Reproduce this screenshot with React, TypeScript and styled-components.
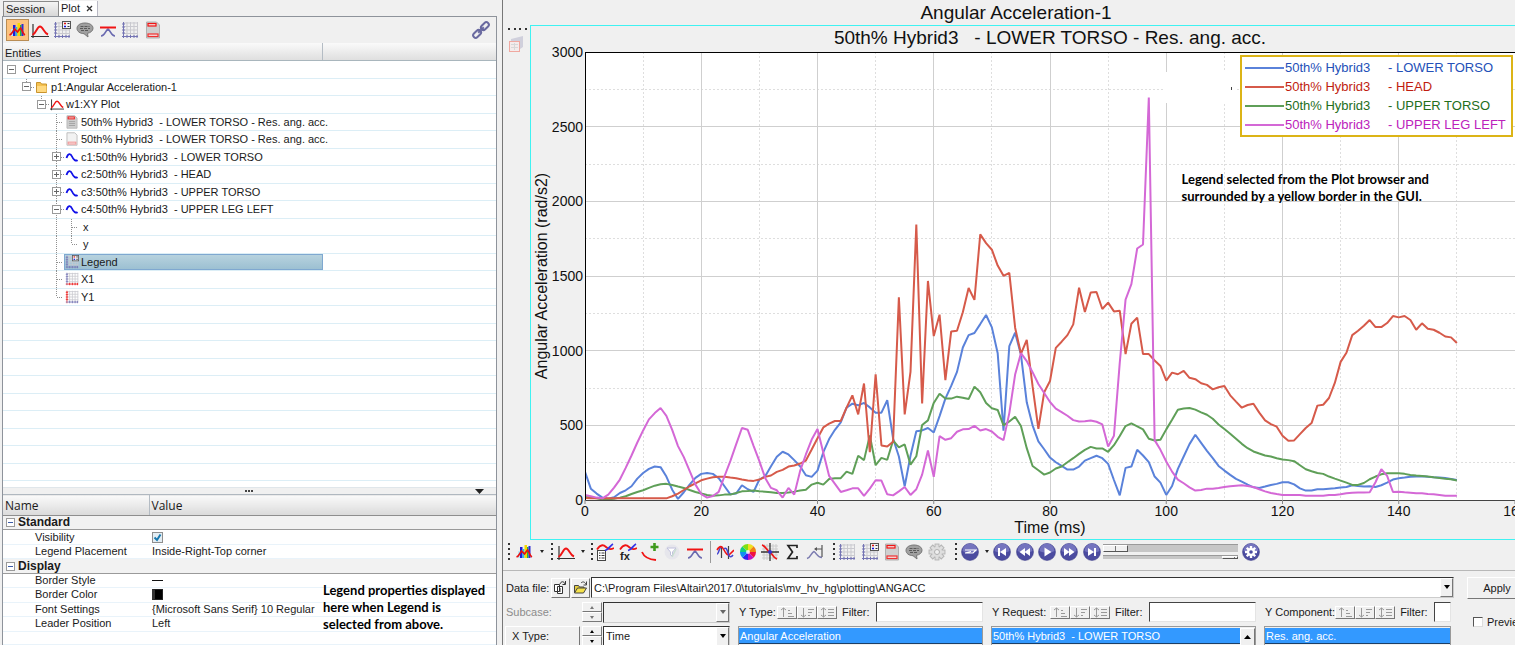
import React from "react";
import styled, { createGlobalStyle, css } from "styled-components";

const Global = createGlobalStyle`
  * { box-sizing: border-box; }
  body { margin: 0; background: #f0f0f0; overflow: hidden; }
  body, button, input, select, table { font-family: "Liberation Sans", Arial, sans-serif; font-size: 11px; color: #1a1a1a; }
  button, input, select { margin: 0; padding: 0; border-radius: 0; }
`;

const Shell = styled.main`
  display: flex;
  height: 100vh;
  overflow: hidden;
`;

/* ---------- browser panel ---------- */

const Browser = styled.section`
  flex: 0 0 497px;
  display: flex;
  flex-direction: column;
  padding-left: 2px;
  min-height: 0;
`;

const Tabs = styled.div`
  display: flex;
  height: 16px;
  padding: 1px 0 0 1px;
`;

const Tab = styled.button<{ $active?: boolean; $width: number }>`
  width: ${(p) => p.$width}px;
  border: 1px solid ${(p) => (p.$active ? "#b9b9c4" : "#8a8a8a")};
  border-width: ${(p) => (p.$active ? "0 1px 0 0" : "1px 1px 0 1px")};
  background: ${(p) => (p.$active ? "#fff" : "linear-gradient(#f4f4f4, #d8d8d8)")};
  text-align: left;
  padding-left: 2px;
  line-height: 15px;
  white-space: pre;
`;

const Panel = styled.div`
  flex: 1;
  min-height: 0;
  display: flex;
  flex-direction: column;
  border: 1px solid #8e939b;
  border-bottom: 0;
  background: #fff;
`;

const PanelTools = styled.div`
  display: flex;
  align-items: center;
  justify-content: space-between;
  height: 26px;
  padding: 0 3px;
  background: #f0f0f0;
`;

const PanelToolSet = styled.div`
  display: flex;
  width: 158px;
`;

const PanelTool = styled.button<{ $active?: boolean }>`
  flex: 1 0 22px;
  min-width: 0;
  height: 22px;
  border: 1px solid ${(p) => (p.$active ? "#b98d55" : "transparent")};
  background: ${(p) => (p.$active ? "#fdc27e" : "transparent")};
  display: flex;
  align-items: center;
  justify-content: center;
  svg { flex: none; }
`;

const TreeHeader = styled.div`
  display: flex;
  height: 18px;
  border-bottom: 1px solid #a9b6bd;
  background: linear-gradient(#fafafa, #dfdfdf);
  line-height: 20px;
`;

const TreeHeaderCell = styled.span`
  flex: 0 0 320px;
  padding-left: 2px;
  border-right: 1px solid #b4bcc4;
`;

const Tree = styled.div`
  flex: 1;
  min-height: 0;
  display: grid;
  grid-template-rows: repeat(24, minmax(0, 1fr)) 6px;
`;

const TreeRow = styled.div`
  display: flex;
  border-bottom: 1px solid #dceef6;
  padding-left: 1px;
  min-height: 0;
  width: 100%;
`;

const GuideCell = styled.span`
  position: relative;
  flex: 0 0 15px;
  display: flex;
  align-items: center;
  justify-content: center;
  svg.guide { position: absolute; left: 0; top: 0; width: 15px; height: 100%; overflow: visible; }
`;

const Expander = styled.button`
  position: relative;
  width: 9px;
  height: 9px;
  border: 1px solid #9a9a9a;
  background: #fff;
  display: flex;
`;

const Label = styled.span<{ $selected?: boolean; $icon: boolean; $level: number }>`
  flex: 0 0 ${(p) => 304 - 15 * p.$level}px;
  display: flex;
  align-items: center;
  gap: 2px;
  padding-left: ${(p) => (p.$icon ? 0 : 3)}px;
  border: 1px solid transparent;
  white-space: pre;
  line-height: 14px;
  svg { flex: 0 0 14px; }
  ${(p) =>
    p.$selected &&
    css`
      border-color: #7fa8d0;
      background: linear-gradient(#b7d2de, #9cc0d2);
    `}
`;

const Splitter = styled.div`
  display: flex;
  align-items: center;
  justify-content: space-between;
  height: 7px;
  padding: 0 12px 0 242px;
  background: #f0f0f0;
  border-top: 1px solid #e0e6ea;
`;

const Props = styled.div`
  position: relative;
`;

const PropTable = styled.table`
  width: 100%;
  height: 151px;
  border-collapse: collapse;
  table-layout: fixed;
  th, td { padding: 0; text-align: left; white-space: nowrap; }
  thead th {
    height: 21px;
    font: 12px "Open Sans", "Noto Sans", sans-serif;
    background: linear-gradient(#fafafa, #dadada);
    border-bottom: 1px solid #8e8e8e;
    border-top: 1px solid #b0b8c0;
    padding-left: 2px;
  }
  thead th:first-child { width: 146px; }
  thead th + th { border-left: 1px solid #b4bcc4; }
  tbody td { line-height: 13px; border-bottom: 1px solid #e9f3fa; vertical-align: middle; }
  tbody td:first-child { padding-left: 32px; }
  tbody td + td { padding-left: 3px; }
  tbody tr:last-child td { line-height: 12px; }
`;

const GroupRow = styled.tr`
  && th { line-height: 13px; font-size: 12px; font-weight: bold; background: #f2f2f2; border-top: 1px solid #9a9a9a; border-bottom: 1px solid #9a9a9a; padding-left: 3px; }
`;

const GroupTitle = styled.span`
  display: flex;
  align-items: center;
  gap: 3px;
`;

const TickBox = styled.span`
  display: grid;
  width: 11px;
  height: 11px;
  > * { grid-area: 1 / 1; }
  svg { pointer-events: none; z-index: 1; }
  input { appearance: none; width: 11px; height: 11px; border: 1px solid #8e8e8e; background: #e3edf3; }
  input:not(:checked) + svg { display: none; }
`;

const Stroke = styled.span`
  display: block;
  width: 11px;
  height: 1px;
  background: #111;
`;

const Swatch = styled.span`
  display: block;
  width: 11px;
  height: 11px;
  background: #000;
  border: 1px solid #222;
  border-left: 3px solid #333;
`;

const Note = styled.p<{ $place: "props" | "plot" }>`
  position: absolute;
  margin: 0;
  font: bold 13px/17px Lato, "Open Sans", sans-serif;
  color: #000;
  white-space: nowrap;
  ${(p) => (p.$place === "props" ? "left: 320px; top: 88px;" : "right: 86px; top: 119px;")}
`;

/* ---------- plot window ---------- */

const Work = styled.section`
  flex: 1;
  min-width: 0;
  display: flex;
  flex-direction: column;
  margin-left: 5px;
  border-left: 1px solid #777;
  background: #f0f0f0;
`;

const WindowTitle = styled.h1`
  margin: 0;
  padding-left: 14px;
  font-size: 19px;
  font-weight: normal;
  line-height: 26px;
  height: 25px;
  text-align: center;
  color: #111;
`;

const PlotArea = styled.div`
  flex: 1;
  min-height: 0;
  display: flex;
`;

const Strip = styled.div`
  flex: 0 0 27px;
  padding: 3px 0 0 5px;
  display: flex;
  flex-direction: column;
  gap: 5px;
`;

const Frame = styled.div`
  flex: 1;
  min-width: 0;
  display: grid;
  grid-template: 26px minmax(0, 1fr) 39px / 54px minmax(0, 1fr);
  border: 1px solid #3ff2f2;
  border-right: 0;
  overflow: hidden;
  color: #111;
`;

const Subtitle = styled.h2`
  grid-column: 2;
  margin: 0;
  font-size: 19px;
  font-weight: normal;
  line-height: 24px;
  text-align: center;
  white-space: pre;
`;

const Axis = styled.svg`
  display: block;
  width: 100%;
  height: 100%;
  overflow: visible;
  min-height: 0;
  text { font-size: 14px; fill: #111; }
  text.name { font-size: 16px; }
`;

const AxisCell = styled.div`
  min-height: 0;
  min-width: 0;
`;

const Plot = styled.div`
  position: relative;
  min-height: 0;
  background: #fff;
  > svg { display: block; width: 100%; height: 100%; }
`;

const Legend = styled.ul`
  position: absolute;
  top: 3px;
  right: 2px;
  width: 273px;
  margin: 0;
  padding: 1px 0 1px 3px;
  list-style: none;
  border: 2px solid #dcb416;
  background: #fff;
  font-size: 13px;
`;

const LegendItem = styled.li<{ $line: string; $text: string }>`
  display: flex;
  align-items: center;
  gap: 1px;
  height: 19px;
  color: ${(p) => p.$text};
  white-space: pre;
  &::before { content: ""; width: 39px; height: 2px; background: ${(p) => p.$line}; }
`;

const LegendName = styled.span`
  flex: 0 0 102px;
`;

/* ---------- toolbar ---------- */

const Toolbar = styled.div`
  display: flex;
  align-items: center;
  height: 31px;
  padding: 0 0 7px 5px;
  border-bottom: 1px solid #b8b8b8;
`;

const Grip = styled.span<{ $gap?: number }>`
  flex: 0 0 2px;
  height: 18px;
  margin: 0 1px 0 ${(p) => p.$gap ?? 5}px;
  background: repeating-linear-gradient(#333 0 2px, transparent 2px 5px);
`;

const Divider = styled.span`
  flex: 0 0 1px;
  height: 22px;
  margin: 0 3px 0 4px;
  background: #9a9a9a;
`;

const ToolGroup = styled.div<{ $width?: number }>`
  display: flex;
  flex: 0 0 ${(p) => p.$width ?? 112}px;
`;

const ToolButton = styled.button`
  flex: 1;
  height: 20px;
  min-width: 0;
  border: 0;
  background: transparent;
  display: flex;
  align-items: center;
  justify-content: center;
  svg { flex: none; }
`;

const Caret = styled.button`
  flex: 0 0 9px;
  height: 20px;
  border: 0;
  background: transparent;
  display: flex;
  align-items: center;
  justify-content: center;
  &::before { content: ""; border: solid transparent; border-width: 3px 2px 0; border-top-color: #222; }
`;

const Sliders = styled.div`
  display: flex;
  flex-direction: column;
  gap: 3px;
  flex: 0 0 135px;
`;

const Slider = styled.input<{ $thumb: number; $height: number }>`
  appearance: none;
  width: 135px;
  height: ${(p) => p.$height}px;
  background: #c6c6c6;
  border-top: 1px solid #9a9a9a;
  &::-webkit-slider-thumb {
    appearance: none;
    width: ${(p) => p.$thumb}px;
    height: ${(p) => p.$height - 1}px;
    background: linear-gradient(90deg, transparent 11px, #777 11px 12px, transparent 12px), #f0f0f0;
    border: 1px solid;
    border-color: #fff #555 #555 #fff;
  }
`;

/* ---------- data form ---------- */

const Form = styled.form`
  flex: 0 0 74px;
  padding: 6px 0 0 2px;
  overflow: hidden;
  display: grid;
  grid-template-columns: minmax(0, 1fr) 48px;
  column-gap: 13px;
  align-content: start;
`;

const FormRows = styled.div`
  display: flex;
  flex-direction: column;
  gap: 4px;
  min-width: 0;
`;

const Line = styled.div`
  display: flex;
  align-items: center;
  height: 21px;
`;

const Caption = styled.label<{ $width: number; $dim?: boolean }>`
  flex: 0 0 ${(p) => p.$width}px;
  padding-left: 1px;
  white-space: nowrap;
  color: ${(p) => (p.$dim ? "#8c8c8c" : "#1a1a1a")};
`;

const raised = css`
  border: 1px solid;
  border-color: #fff #777 #777 #fff;
  background: #f0f0f0;
`;

const FileButton = styled.button`
  ${raised}
  flex: 0 0 19px;
  height: 20px;
  margin-right: 1px;
  display: flex;
  align-items: center;
  justify-content: center;
`;

const SelectBox = styled.span<{ $width?: number; $dim?: boolean }>`
  flex: ${(p) => (p.$width ? `0 0 ${p.$width}px` : "1 1 0")};
  min-width: 0;
  display: flex;
  position: relative;
  height: 21px;
  border: 1px solid;
  border-color: #333 #ccc #ccc #333;
  background: ${(p) => (p.$dim ? "#f0f0f0" : "#fff")};
  select { appearance: none; width: 100%; border: 0; padding-left: 2px; background: transparent; outline: none; }
  &::after {
    content: "";
    position: absolute;
    right: 3px;
    top: 7px;
    border: solid transparent;
    border-width: 4px 3px 0;
    border-top-color: ${(p) => (p.$dim ? "#666" : "#000")};
  }
  &::before {
    content: "";
    position: absolute;
    right: 0;
    top: 0;
    bottom: 0;
    width: 11px;
    ${raised}
  }
`;

const Columns = styled.div`
  display: grid;
  grid-template-columns: 225px minmax(0, 245fr) minmax(0, 265fr) minmax(0, 187fr);
  column-gap: 8px;
  padding-right: 3px;
`;

const Column = styled.div`
  display: flex;
  flex-direction: column;
  gap: 4px;
  min-width: 0;
`;

const Filters = styled.div`
  display: flex;
  align-items: center;
  height: 20px;
  white-space: nowrap;
`;

const Spin = styled.span`
  flex: 0 0 20px;
  display: flex;
  flex-direction: column;
  margin-right: 1px;
`;

const SpinButton = styled.button`
  ${raised}
  height: 10px;
  display: flex;
  align-items: center;
  justify-content: center;
`;

const AxisType = styled.button`
  ${raised}
  flex: 0 0 75px;
  height: 21px;
  margin-right: 2px;
  padding-left: 6px;
  text-align: left;
`;

const SortButton = styled.button`
  ${raised}
  flex: 0 0 20px;
  height: 13px;
  display: flex;
  align-items: center;
  justify-content: center;
`;

const FilterText = styled.label`
  margin: 0 6px 0 5px;
`;

const FilterInput = styled.input`
  flex: 1;
  min-width: 0;
  height: 20px;
  border: 1px solid;
  border-color: #444 #e4e4e4 #e4e4e4 #444;
  background: #fff;
`;

const ListBox = styled.div`
  display: flex;
  height: 21px;
  padding-top: 1px;
  border: 1px solid #999;
  border-width: 1px 1px 0;
`;

const Option = styled.span`
  flex: 1;
  height: 16px;
  padding-left: 1px;
  line-height: 16px;
  color: #fff;
  background: #3399ff;
  border-bottom: 1px solid #1c3f66;
  white-space: pre;
  overflow: hidden;
`;

const Scroll = styled.button`
  ${raised}
  flex: 0 0 15px;
  height: 18px;
  display: flex;
  align-items: center;
  justify-content: center;
`;

const Actions = styled.div`
  display: flex;
  flex-direction: column;
  gap: 17px;
`;

const Apply = styled.button`
  ${raised}
  width: 60px;
  height: 22px;
`;

const Preview = styled.label`
  display: flex;
  align-items: center;
  gap: 4px;
  padding-left: 6px;
  white-space: nowrap;
  input { appearance: none; flex: 0 0 10px; height: 10px; border: 1px solid; border-color: #555 #ddd #ddd #555; background: #fff; }
`;

/* ---------- icons ---------- */

const Svg = ({ s = 18, vb = 18, children }: { s?: number; vb?: number; children: React.ReactNode }) => (
  <svg width={s} height={s} viewBox={`0 0 ${vb} ${vb}`} fill="none" aria-hidden="true">
    {children}
  </svg>
);

const BarsIcon = () => (
  <Svg>
    <path d="M3 8h2v7H3z" fill="#b8e8f8" />
    <path d="M5 4h2.500v11H5z" fill="#1c1cdc" />
    <path d="M7.500 6h2v9h-2z" fill="#28b8e8" />
    <path d="M9.500 2h2.500v13H9.500z" fill="#f6d800" />
    <path d="M12 4h1.500v11H12z" fill="#20b83c" />
    <path d="M13.500 3h2v12h-2z" fill="#2c2cd4" />
    <path d="M1.500 14c3-1 3-4 5-6l3 3 3-4c2 2 2 6 4.500 7" stroke="#e81010" strokeWidth="1.700" />
  </Svg>
);
const CurveIcon = ({ s = 18 }: { s?: number }) => (
  <Svg s={s}>
    <path d="M2 3v14M0 15.500h18" stroke="#333" strokeWidth="1.200" />
    <path d="M1.500 14C5.500 12 6 5.500 9 5.500S13 12 17 13.500" stroke="#f01414" strokeWidth="1.900" />
  </Svg>
);
const GridLines = ({ v = "#7474b4", h = "#7474b4" }: { v?: string; h?: string }) => (
  <>
    <path d="M6 1v15M9.500 1v15M13 1v15M16.500 1v15M2 2h15M2 5.500h15M2 9h15M2 12.500h15" stroke="#c9c9cf" />
    <path d="M2.500 1v16M1 3h3M1 6h3M1 9h3M1 12h3" stroke={v} strokeWidth="1" />
    <path d="M1 15.500h16M6 14v3M9.500 14v3M13 14v3M16 14v3" stroke={h} strokeWidth="1" />
  </>
);
const GridIcon = () => (
  <Svg>
    <GridLines />
  </Svg>
);
const AxisIcon = ({ axis }: { axis: "x" | "y" }) => (
  <Svg s={14}>
    <GridLines v={axis === "y" ? "#f01414" : undefined} h={axis === "x" ? "#f01414" : undefined} />
  </Svg>
);
const LegendIcon = ({ s = 18 }: { s?: number }) => (
  <Svg s={s}>
    <GridLines />
    <rect x="9.500" y="0.500" width="8" height="7" fill="#f4f4f4" stroke="#555" />
    <path d="M11 2.500h2" stroke="#e01010" strokeWidth="1.500" />
    <path d="M11 5.500h2" stroke="#1010e0" strokeWidth="1.500" />
    <path d="M14.500 2.500h2M14.500 5.500h2" stroke="#334" strokeWidth="1.200" />
  </Svg>
);
const NoteIcon = () => (
  <Svg>
    <path d="M9 2c4.800 0 8 2.200 8 5.300 0 2.600-2.400 4.400-5.500 5L12 16 8 12.700C4 12.500 1 10.500 1 7.400 1 4.200 4.200 2 9 2z" fill="#a0a0a0" stroke="#777" />
    <path d="M4.500 5.500h9M4 7.500h10M5 9.500h8" stroke="#5a5a5a" strokeDasharray="3 1" />
  </Svg>
);
const DatumIcon = () => (
  <Svg>
    <path d="M2 15c4 0 4-5 7-7 3 2 3 7 7 7" stroke="#6a6ab0" strokeWidth="1.600" />
    <path d="M1 6.500h16" stroke="#f01414" strokeWidth="2" />
  </Svg>
);
const PageIcon = ({ s = 18, part = "both" }: { s?: number; part?: "both" | "head" | "foot" }) => (
  <Svg s={s}>
    <path d="M2.500 1h10l3 3v13h-13z" fill={part === "foot" ? "#f2f2f2" : "#cfcfcf"} stroke="#b0b0b0" />
    {part !== "foot" && <rect x="4" y="2.500" width="8" height="2.500" fill="#f3dada" stroke="#f01414" strokeWidth="1.200" />}
    {part === "head" && <path d="M5 8.500h8M5 11h8M5 13.500h8" stroke="#999" />}
    {part !== "head" && <rect x="4" y="13" width="10" height="2.500" fill="#f6e4e4" stroke={part === "foot" ? "#f29090" : "#f03030"} strokeWidth="1.200" />}
  </Svg>
);
const WaveIcon = () => (
  <Svg s={14} vb={14}>
    <path d="M1.500 8C3 3 5.500 3 7 6.500S11 11.500 12.500 10" stroke="#1010e8" strokeWidth="1.800" />
  </Svg>
);
const FolderIcon = () => (
  <Svg s={14} vb={14}>
    <path d="M1.500 2.500h4l1 1.500h5v8.500h-10z" fill="#f5c14f" stroke="#c8942e" />
    <path d="M2 6h9.500v6H2z" fill="#ffd980" />
  </Svg>
);
const LinkIcon = () => (
  <Svg s={20} vb={20}>
    <g stroke="#6a6aa0" strokeWidth="2" transform="rotate(-45 10 10)">
      <rect x="0" y="7.500" width="9" height="5" rx="2.500" />
      <rect x="11" y="7.500" width="9" height="5" rx="2.500" />
      <path d="M6 10h8" />
    </g>
  </Svg>
);
const TwoCurves = () => (
  <>
    <path d="M1 6.500c4-6 7-4.500 9-2.500s5 3 8 1" stroke="#f01414" strokeWidth="1.800" />
    <path d="M9 7.500c4-1 5-5 8-6.500" stroke="#3434e8" strokeWidth="1.800" />
  </>
);
const TableCurveIcon = () => (
  <Svg>
    <rect x="1.500" y="7.500" width="8" height="10" fill="#fff" stroke="#444" />
    <path d="M3 10h1.500M5.500 10h3M3 12.500h1.500M5.500 12.500h3M3 15h1.500M5.500 15h3" stroke="#333" />
    <TwoCurves />
  </Svg>
);
const FxIcon = () => (
  <Svg>
    <TwoCurves />
    <text x="1" y="17" fontSize="11" fontWeight="bold" fill="#222">fx</text>
  </Svg>
);
const AddIcon = () => (
  <Svg>
    <path d="M1 9c2 5 7 7.500 14 8" stroke="#f01414" strokeWidth="1.800" />
    <path d="M13.500 0v8M9.500 4h8" stroke="#3f9a1e" strokeWidth="2.600" />
  </Svg>
);
const FunnelIcon = () => (
  <Svg>
    <circle cx="9" cy="9" r="7.500" fill="#e6e6ec" />
    <path d="M4 5h9L9.500 9v4l-2-1V9z" fill="#fff" stroke="#c0c0dc" />
    <path d="M9 14l4-8" stroke="#cbdfd2" strokeWidth="1.500" />
  </Svg>
);
const CrossCurvesIcon = () => (
  <Svg>
    <path d="M5.500 3v12M12.500 3v13" stroke="#444" strokeWidth="1.200" />
    <path d="M1 11C3 11 3 4 5.500 4" stroke="#4444d0" strokeWidth="1.500" />
    <path d="M1 7c3-5 5-4 7 0s4 6 6 4l4-4" stroke="#f01414" strokeWidth="1.600" />
    <path d="M8 6c2-2 3 0 4 4s3 5 5 2" stroke="#4444d0" strokeWidth="1.500" />
  </Svg>
);
const WHEEL = ["#f0e020", "#f08010", "#f01040", "#c010c0", "#3020f0", "#1090f0", "#10d080", "#80e010"];
const WheelIcon = () => (
  <Svg>
    {WHEEL.map((c, i) => (
      <path key={c} d="M9 9V1A8 8 0 0 1 14.700 3.300z" fill={c} transform={`rotate(${i * 45} 9 9)`} />
    ))}
    <circle cx="9" cy="9" r="2" fill="#fff" fillOpacity="0.800" />
  </Svg>
);
const CrosshairIcon = () => (
  <Svg>
    <path d="M3 1v16M6 1v16M12 1v16M15 1v16M1 3h16M1 6h16M1 12h16M1 15h16" stroke="#ccc" />
    <path d="M9 0v18M0 9h18" stroke="#333" strokeWidth="1.300" />
    <path d="M1 2c4 1 5 6 8 7" stroke="#f01414" strokeWidth="1.700" />
    <path d="M9 9c2 1 3 6 7 7" stroke="#f01414" strokeWidth="1.600" />
    <circle cx="9" cy="9" r="2" fill="#3434d0" />
  </Svg>
);
const SigmaIcon = () => (
  <Svg>
    <path d="M14 5V2.500H5L9.500 9 5 15.500h9V13" stroke="#222" strokeWidth="1.700" />
  </Svg>
);
const AnchorCurveIcon = () => (
  <Svg>
    <path d="M1 15.500c4-1 4-6 7-7 3 2 3 6 8 6" stroke="#7c7cb0" strokeWidth="1.500" />
    <path d="M9 6h7M16 2v12" stroke="#555" strokeWidth="1.200" />
    <path d="M8 6l3-2v4z" fill="#555" />
  </Svg>
);
const Gear = ({ fill }: { fill: string }) => (
  <>
    {[0, 45, 90, 135].map((a) => (
      <rect key={a} x="7.800" y="3" width="2.400" height="12" fill={fill} transform={`rotate(${a} 9 9)`} />
    ))}
    <circle cx="9" cy="9" r="4" fill={fill} />
  </>
);
const GrayGearIcon = () => (
  <Svg>
    <g transform="translate(9 9) scale(1.250) translate(-9 -9)">
      <g stroke="#b4b4b4" strokeWidth="1.500"><Gear fill="#dedede" /></g>
      <Gear fill="#dedede" />
    </g>
    <circle cx="9" cy="9" r="2.500" fill="#f0f0f0" stroke="#b0b0b0" />
  </Svg>
);
const Ball = ({ children }: { children: React.ReactNode }) => (
  <Svg>
    <circle cx="9" cy="9" r="8.500" fill="#4c4ca0" stroke="#3a3a84" strokeWidth="0.500" />
    <path d="M1.500 8a7.500 7.500 0 0 1 15 0c-4 2-11 2-15 0z" fill="#7474be" />
    {children}
  </Svg>
);
const BALLS: Record<string, string> = {
  First: "M5 5h2v8H5zM13 5v8L7 9z",
  Back: "M9 5v8L3.500 9zM14 5v8L8.500 9z",
  Play: "M6.500 4.500v9L13.500 9z",
  Forward: "M4 5v8l5.500-4zM9 5v8l5.500-4z",
  Last: "M5 5v8l6-4zM11 5h2v8h-2z",
};

/* ---------- data ---------- */

type Node = { label: string; cells: string; icon?: React.ReactNode; selected?: boolean };

// cells: one letter per indent column. "." empty, "|" line, "T" branch, "L" last branch,
// "-" open node ending its line, "=" open node on a running line, "+" closed node, "o" open root.
const NODES: Node[] = [
  { label: "Current Project", cells: "o" },
  { label: "p1:Angular Acceleration-1", cells: ".-", icon: <FolderIcon /> },
  { label: "w1:XY Plot", cells: "..-", icon: <CurveIcon s={14} /> },
  { label: "50th% Hybrid3  - LOWER TORSO - Res. ang. acc.", cells: "...T", icon: <PageIcon s={14} part="head" /> },
  { label: "50th% Hybrid3  - LOWER TORSO - Res. ang. acc.", cells: "...T", icon: <PageIcon s={14} part="foot" /> },
  { label: "c1:50th% Hybrid3  - LOWER TORSO", cells: "...+", icon: <WaveIcon /> },
  { label: "c2:50th% Hybrid3  - HEAD", cells: "...+", icon: <WaveIcon /> },
  { label: "c3:50th% Hybrid3  - UPPER TORSO", cells: "...+", icon: <WaveIcon /> },
  { label: "c4:50th% Hybrid3  - UPPER LEG LEFT", cells: "...=", icon: <WaveIcon /> },
  { label: "x", cells: "...|T" },
  { label: "y", cells: "...|L" },
  { label: "Legend", cells: "...T", icon: <LegendIcon s={14} />, selected: true },
  { label: "X1", cells: "...T", icon: <AxisIcon axis="x" /> },
  { label: "Y1", cells: "...L", icon: <AxisIcon axis="y" /> },
];

const BLANK_ROWS = 24 - NODES.length;

const SERIES = [
  {
    part: "LOWER TORSO", line: "#5a82da", text: "#2450b8",
    data: [188,76,43,16,9,18,47,65,92,143,181,208,224,220,157,69,7,52,103,148,175,181,175,146,92,38,43,99,72,54,137,159,226,289,323,305,267,226,166,155,197,320,408,470,520,618,645,634,650,620,585,585,668,412,291,92,296,461,466,482,452,562,679,764,858,1021,1104,1118,1178,1239,1156,983,464,1030,1120,974,654,500,392,340,284,253,228,204,204,224,264,280,296,280,242,134,31,215,224,336,298,253,157,116,34,94,208,291,374,437,383,329,280,228,197,168,141,123,103,85,81,90,101,108,119,119,105,78,63,63,72,72,76,78,83,87,99,94,90,92,87,99,116,137,146,150,155,157,159,155,152,150,148,141,134],
  },
  {
    part: "HEAD", line: "#d65a4a", text: "#c01c10",
    data: [13,11,11,11,11,11,11,11,11,11,11,11,11,11,11,25,43,67,92,112,132,143,152,155,155,150,146,137,130,128,137,155,164,188,202,224,231,244,264,338,414,486,511,529,529,618,701,573,780,320,842,365,358,390,1357,573,858,1844,647,1467,1098,1241,802,1129,1133,1257,1420,1340,1779,1720,1676,1570,1501,1521,1154,979,1073,762,477,721,797,1019,1060,1104,1176,1422,1259,1389,1393,1279,1322,1263,1268,977,1180,1221,977,977,934,898,800,853,842,865,818,809,782,771,741,755,764,701,659,618,636,645,585,533,508,491,430,396,399,441,482,515,632,638,683,784,925,986,1104,1133,1167,1205,1158,1158,1185,1232,1223,1232,1205,1140,1183,1147,1140,1120,1095,1089,1051],
  },
  {
    part: "UPPER TORSO", line: "#5f9f58", text: "#246e1c",
    data: [20,16,11,4,4,9,16,25,40,54,65,81,96,105,108,101,90,81,67,54,43,34,29,31,36,36,47,58,60,63,58,56,52,47,47,50,56,63,69,103,116,103,141,146,146,190,175,296,267,432,233,282,269,399,352,372,237,293,502,533,650,712,679,679,692,685,676,759,721,650,614,603,500,526,558,495,347,228,199,170,184,211,224,253,280,309,336,356,345,345,323,367,428,495,513,493,473,410,399,403,473,538,605,612,616,605,587,571,544,506,475,444,410,376,347,325,311,298,291,280,271,267,260,233,206,193,181,175,157,143,130,116,101,101,114,139,157,172,179,179,179,175,168,164,161,157,152,148,143,139,130],
  },
  {
    part: "UPPER LEG LEFT", line: "#d468d6", text: "#bc22bc",
    data: [34,25,16,11,36,83,137,215,298,385,466,540,582,616,564,470,361,287,195,103,40,16,27,54,159,260,372,482,470,363,260,148,81,65,16,81,36,193,305,405,475,316,161,108,54,65,78,78,27,76,132,130,38,31,58,87,34,72,170,332,155,428,403,414,457,473,475,497,466,475,459,423,401,582,840,983,930,856,777,717,656,612,589,564,535,526,528,533,524,506,358,430,918,1342,1445,1684,1711,2695,401,336,258,190,137,112,85,63,67,76,76,81,87,92,96,99,94,87,72,58,47,40,34,34,34,34,29,29,29,29,34,34,38,45,49,50,50,52,119,206,161,54,56,52,49,45,45,40,38,34,29,29,29],
  },
];

const LINE_ORDER = [0, 2, 1, 3];
const X_TICKS = [0, 20, 40, 60, 80, 100, 120, 140, 160];
const X_MINOR = [10, 30, 50, 70, 90, 110, 130, 150];
const Y_TICKS = [0, 500, 1000, 1500, 2000, 2500, 3000];
const Y_MINOR = [250, 750, 1250, 1750, 2250, 2750];
const px = (v: number) => `${(v / 160) * 100}%`;
const py = (v: number) => `${100 - (v / 3000) * 100}%`;

/* ---------- parts ---------- */

const Guide = ({ kind }: { kind: string }) => {
  const open = kind === "-" || kind === "o" || kind === "=";
  const node = open || kind === "+";
  return (
    <GuideCell>
      {kind !== "." && kind !== "o" && (
        <svg className="guide" stroke="#909090" strokeDasharray="1 1" shapeRendering="crispEdges" aria-hidden="true">
          <line x1="7.500" x2="7.500" y1="0" y2={kind === "L" || kind === "-" ? "50%" : "100%"} />
          {kind !== "|" && <line x1="8" x2={node ? "16" : "14"} y1="50%" y2="50%" />}
        </svg>
      )}
      {node && (
        <Expander aria-label={open ? "Collapse" : "Expand"}>
          <svg width="7" height="7" stroke="#666" aria-hidden="true">
            <path d={open ? "M1 3.500h5" : "M1 3.500h5M3.500 1v5"} />
          </svg>
        </Expander>
      )}
    </GuideCell>
  );
};

const SORTS = ["M3.500 2v9M1 4l2.500-2 2.500 2M8 4.500h2M8 7.500h4M8 10.500h6", "M3.500 2v9M1 9l2.500 2L6 9M8 3.500h6M8 6.500h4M8 9.500h2", "M3.500 2v9M1 4l2.500-2 2.500 2M1 9l2.500 2L6 9M8 3.500h6M8 6.500h6M8 9.500h6"];

const FilterBar = ({ id, name, width }: { id: string; name: string; width: number }) => (
  <Filters>
    <Caption as="span" $width={width}>{name}</Caption>
    {SORTS.map((d, i) => (
      <SortButton type="button" key={d} aria-label={`${name} sort ${i + 1}`}>
        <svg width="15" height="12" fill="none" stroke="#999" aria-hidden="true"><path d={d} /></svg>
      </SortButton>
    ))}
    <FilterText htmlFor={id}>Filter:</FilterText>
    <FilterInput id={id} />
  </Filters>
);

const Spinner = ({ color }: { color: string }) => (
  <Spin>
    {["M0 3l2-3 2 3z", "M0 0l2 3 2-3z"].map((d, i) => (
      <SpinButton type="button" key={d} aria-label={i ? "Next" : "Previous"}>
        <svg width="4" height="3" fill={color} aria-hidden="true"><path d={d} /></svg>
      </SpinButton>
    ))}
  </Spin>
);

const Minus = () => (
  <Expander aria-label="Collapse group">
    <svg width="7" height="7" stroke="#3b5ba8" aria-hidden="true"><path d="M1 3.500h5" /></svg>
  </Expander>
);

const Chart = () => (
  <Frame>
    <Subtitle>{"50th% Hybrid3   - LOWER TORSO - Res. ang. acc."}</Subtitle>
    <AxisCell>
      <Axis>
        {Y_TICKS.map((v) => (
          <text key={v} x="52" y={py(v)} dy="5" textAnchor="end">{v}</text>
        ))}
        <svg x="16" y="50%" overflow="visible">
          <text className="name" transform="rotate(-90)" textAnchor="middle">Angular Acceleration (rad/s2)</text>
        </svg>
      </Axis>
    </AxisCell>
    <Plot>
      <svg role="img" aria-label="Angular acceleration over time">
        <g shapeRendering="crispEdges">
          <g stroke="#dedede" strokeDasharray="2 2">
            {X_MINOR.map((v) => <line key={v} x1={px(v)} x2={px(v)} y1="0" y2="100%" />)}
            {Y_MINOR.map((v) => <line key={v} x1="0" x2="100%" y1={py(v)} y2={py(v)} />)}
          </g>
          <g stroke="#cfcfcf">
            {X_TICKS.slice(1).map((v) => <line key={v} x1={px(v)} x2={px(v)} y1="0" y2="100%" />)}
            {Y_TICKS.slice(1, -1).map((v) => <line key={v} x1="0" x2="100%" y1={py(v)} y2={py(v)} />)}
          </g>
          <svg x={px(100)} y="20" width="70" height="31" overflow="visible">
            <rect x="-1" width="70" height="31" fill="#fff" />
            <rect x="65" y="15" width="1" height="3" fill="#444" />
          </svg>
        </g>
        <svg viewBox="0 0 160 3000" preserveAspectRatio="none" width="100%" height="100%">
          {LINE_ORDER.map((i) => (
            <polyline
              key={SERIES[i].part}
              points={SERIES[i].data.map((v, t) => `${t},${3000 - v}`).join(" ")}
              fill="none"
              stroke={SERIES[i].line}
              strokeWidth="2"
              strokeLinejoin="bevel"
              vectorEffect="non-scaling-stroke"
            />
          ))}
        </svg>
        <g shapeRendering="crispEdges">
          <rect width="100%" height="1" fill="#000" />
          <rect width="1" height="100%" fill="#000" />
        </g>
      </svg>
      <Legend>
        {SERIES.map((s) => (
          <LegendItem key={s.part} $line={s.line} $text={s.text}>
            <LegendName>50th% Hybrid3</LegendName>
            <span>- {s.part}</span>
          </LegendItem>
        ))}
      </Legend>
      <Note $place="plot">
        Legend selected from the Plot browser and
        <br />
        surrounded by a yellow border in the GUI.
      </Note>
    </Plot>
    <AxisCell />
    <AxisCell>
      <Axis>
        <rect width="100%" height="1" fill="#444" />
        {X_TICKS.map((v) => (
          <React.Fragment key={v}>
            <line x1={px(v)} x2={px(v)} y1="0" y2="4" stroke="#888" />
            <text x={px(v)} y="16" textAnchor="middle">{v}</text>
          </React.Fragment>
        ))}
        <text className="name" x="50%" y="33" textAnchor="middle">Time (ms)</text>
      </Axis>
    </AxisCell>
  </Frame>
);

const Tools = ({ items }: { items: [string, React.ReactNode][] }) => (
  <ToolGroup>
    {items.map(([name, icon]) => (
      <ToolButton key={name} aria-label={name}>{icon}</ToolButton>
    ))}
  </ToolGroup>
);

export default function App() {
  return (
    <Shell>
      <Global />
      <Browser>
        <Tabs>
          <Tab $width={56}>Session</Tab>
          <Tab $active $width={39}>
            {"Plot  "}
            <svg width="7" height="7" stroke="#333" strokeWidth="1.300" aria-hidden="true"><path d="M1 1l5 5M6 1L1 6" /></svg>
          </Tab>
        </Tabs>
        <Panel>
          <PanelTools>
            <PanelToolSet>
              <PanelTool $active aria-label="Plots"><BarsIcon /></PanelTool>
              <PanelTool aria-label="Curves"><CurveIcon /></PanelTool>
              <PanelTool aria-label="Legend"><LegendIcon /></PanelTool>
              <PanelTool aria-label="Notes"><NoteIcon /></PanelTool>
              <PanelTool aria-label="Datums"><DatumIcon /></PanelTool>
              <PanelTool aria-label="Axes"><GridIcon /></PanelTool>
              <PanelTool aria-label="Headers"><PageIcon /></PanelTool>
            </PanelToolSet>
            <ToolGroup $width={24}>
              <PanelTool aria-label="Link"><LinkIcon /></PanelTool>
            </ToolGroup>
          </PanelTools>
          <TreeHeader>
            <TreeHeaderCell>Entities</TreeHeaderCell>
          </TreeHeader>
          <Tree>
            {NODES.map((n, i) => (
              <TreeRow key={i}>
                {n.cells.split("").map((c, j) => <Guide key={j} kind={c} />)}
                <Label $selected={n.selected} $icon={!!n.icon} $level={n.cells.length - 1}>
                  {n.icon}
                  {n.label}
                </Label>
              </TreeRow>
            ))}
            {Array.from({ length: BLANK_ROWS }, (_, i) => <TreeRow key={`blank${i}`} />)}
          </Tree>
          <Splitter>
            <svg width="8" height="2" fill="#444" aria-hidden="true"><path d="M0 0h2v2H0zM3 0h2v2H3zM6 0h2v2H6z" /></svg>
            <svg width="9" height="5" fill="#222" aria-hidden="true"><path d="M0 0h9L4.500 5z" /></svg>
          </Splitter>
          <Props>
            <PropTable>
              <thead>
                <tr><th>Name</th><th>Value</th></tr>
              </thead>
              <tbody>
                <GroupRow><th colSpan={2}><GroupTitle><Minus />Standard</GroupTitle></th></GroupRow>
                <tr>
                  <td><label htmlFor="visibility">Visibility</label></td>
                  <td>
                    <TickBox>
                      <input id="visibility" type="checkbox" defaultChecked />
                      <svg width="11" height="11" fill="none" stroke="#1878ae" strokeWidth="2" aria-hidden="true"><path d="M2.500 5.500L5 8l3.500-5.500" /></svg>
                    </TickBox>
                  </td>
                </tr>
                <tr><td>Legend Placement</td><td>Inside-Right-Top corner</td></tr>
                <GroupRow><th colSpan={2}><GroupTitle><Minus />Display</GroupTitle></th></GroupRow>
                <tr><td>Border Style</td><td><Stroke /></td></tr>
                <tr><td>Border Color</td><td><Swatch /></td></tr>
                <tr><td>Font Settings</td><td>{"{Microsoft Sans Serif} 10 Regular"}</td></tr>
                <tr><td>Leader Position</td><td>Left</td></tr>
                <tr><td>&nbsp;</td><td /></tr>
              </tbody>
            </PropTable>
            <Note $place="props">
              Legend properties displayed
              <br />
              here when Legend is
              <br />
              selected from above.
            </Note>
          </Props>
        </Panel>
      </Browser>

      <Work>
        <WindowTitle>Angular Acceleration-1</WindowTitle>
        <PlotArea>
          <Strip>
            <svg width="20" height="2" fill="#333" aria-hidden="true"><path d="M0 0h2v2H0zM6 0h2v2H6zM11 0h2v2h-2zM17 0h2v2h-2z" /></svg>
            <svg width="17" height="18" fill="none" aria-hidden="true">
              <path d="M3 4l12-3v11l-3 2V6L3 6z" fill="#d0d0dc" />
              <rect x="1.500" y="6.500" width="10" height="10" fill="#f4ecec" stroke="#f0a8a0" />
              <path d="M3 9.500h7M3 12.500h7M6.500 8v7" stroke="#d8d8d8" />
            </svg>
          </Strip>
          <Chart />
        </PlotArea>
        <Toolbar>
          <Grip $gap={0} />
          <ToolGroup $width={26}><ToolButton aria-label="Plot type"><BarsIcon /></ToolButton></ToolGroup>
          <Caret aria-label="Plot type menu" />
          <Grip />
          <ToolGroup $width={24}><ToolButton aria-label="Curve type"><CurveIcon /></ToolButton></ToolGroup>
          <Caret aria-label="Curve type menu" />
          <Grip $gap={4} />
          <Tools items={[["Define curves", <TableCurveIcon />], ["Curve math", <FxIcon />], ["Add curve", <AddIcon />], ["Filter curves", <FunnelIcon />], ["Datum line", <DatumIcon />]]} />
          <Divider />
          <Tools items={[["Modify curves", <CrossCurvesIcon />], ["Curve attributes", <WheelIcon />], ["Coordinate info", <CrosshairIcon />], ["Statistics", <SigmaIcon />], ["Offset", <AnchorCurveIcon />]]} />
          <Grip $gap={7} />
          <Tools items={[["Axes", <GridIcon />], ["Legends", <LegendIcon />], ["Headers and footers", <PageIcon />], ["Notes", <NoteIcon />], ["Options", <GrayGearIcon />]]} />
          <Grip $gap={7} />
          <ToolGroup $width={24}>
            <ToolButton aria-label="Animation mode"><Ball><path d="M4 7h11l-3 3H4l6-1.500" stroke="#fff" strokeWidth="1.200" /></Ball></ToolButton>
          </ToolGroup>
          <Caret aria-label="Animation mode menu" />
          <Tools items={Object.entries(BALLS).map(([n, d]) => [n, <Ball><path d={d} fill="#fff" /></Ball>] as [string, React.ReactNode])} />
          <Sliders>
            <Slider type="range" aria-label="Time" defaultValue={0} $thumb={25} $height={8} />
            <Slider type="range" aria-label="Speed" defaultValue={100} $thumb={16} $height={4} />
          </Sliders>
          <ToolGroup $width={26}>
            <ToolButton aria-label="Animation controls"><Ball><Gear fill="#fff" /><circle cx="9" cy="9" r="1.800" fill="#4c4ca0" /></Ball></ToolButton>
          </ToolGroup>
        </Toolbar>
        <Form onSubmit={(e) => e.preventDefault()}>
          <FormRows>
            <Line>
              <Caption htmlFor="file" $width={46}>Data file:</Caption>
              <FileButton type="button" aria-label="Recent files">
                <svg width="15" height="15" fill="#fff" stroke="#333" aria-hidden="true"><path d="M1.500 4.500h5v7h-5zM4.500 6.500h5v7h-5zM6 9h2M6 11h2" /><path d="M7 4c1-3 4-3 5 0M12.500 1v3.500h-3" fill="none" /></svg>
              </FileButton>
              <FileButton type="button" aria-label="Open file">
                <svg width="15" height="15" stroke="#444" aria-hidden="true"><path d="M1.500 13V5.500h4l1 1.500H11v2" fill="#e8d040" /><path d="M1.500 13l3-5h9l-3 5z" fill="#f5e24a" /><path d="M8 3c2-2 4-1 5 1.500M13.500 1.500v3.500h-3" fill="none" /></svg>
              </FileButton>
              <SelectBox>
                <select id="file"><option>{"C:\\Program Files\\Altair\\2017.0\\tutorials\\mv_hv_hg\\plotting\\ANGACC"}</option></select>
              </SelectBox>
            </Line>
            <Columns>
              <Column>
                <Filters>
                  <Caption htmlFor="subcase" $width={77} $dim>Subcase:</Caption>
                  <Spinner color="#777" />
                  <SelectBox $width={127} $dim><select id="subcase" /></SelectBox>
                </Filters>
                <Filters>
                  <AxisType type="button">X Type:</AxisType>
                  <Spinner color="#000" />
                  <SelectBox $width={127}><select aria-label="X Type"><option>Time</option></select></SelectBox>
                </Filters>
              </Column>
              <Column>
                <FilterBar id="ytype" name="Y Type:" width={39} />
                <ListBox><Option>Angular Acceleration</Option></ListBox>
              </Column>
              <Column>
                <FilterBar id="yrequest" name="Y Request:" width={59} />
                <ListBox>
                  <Option>{"50th% Hybrid3  - LOWER TORSO"}</Option>
                  <Scroll type="button" aria-label="Scroll up"><svg width="7" height="4" aria-hidden="true"><path d="M0 4l3.500-4L7 4z" /></svg></Scroll>
                </ListBox>
              </Column>
              <Column>
                <FilterBar id="ycomponent" name="Y Component:" width={70} />
                <ListBox><Option>Res. ang. acc.</Option></ListBox>
              </Column>
            </Columns>
          </FormRows>
          <Actions>
            <Apply type="submit">Apply</Apply>
            <Preview><input type="checkbox" />Preview</Preview>
          </Actions>
        </Form>
      </Work>
    </Shell>
  );
}
